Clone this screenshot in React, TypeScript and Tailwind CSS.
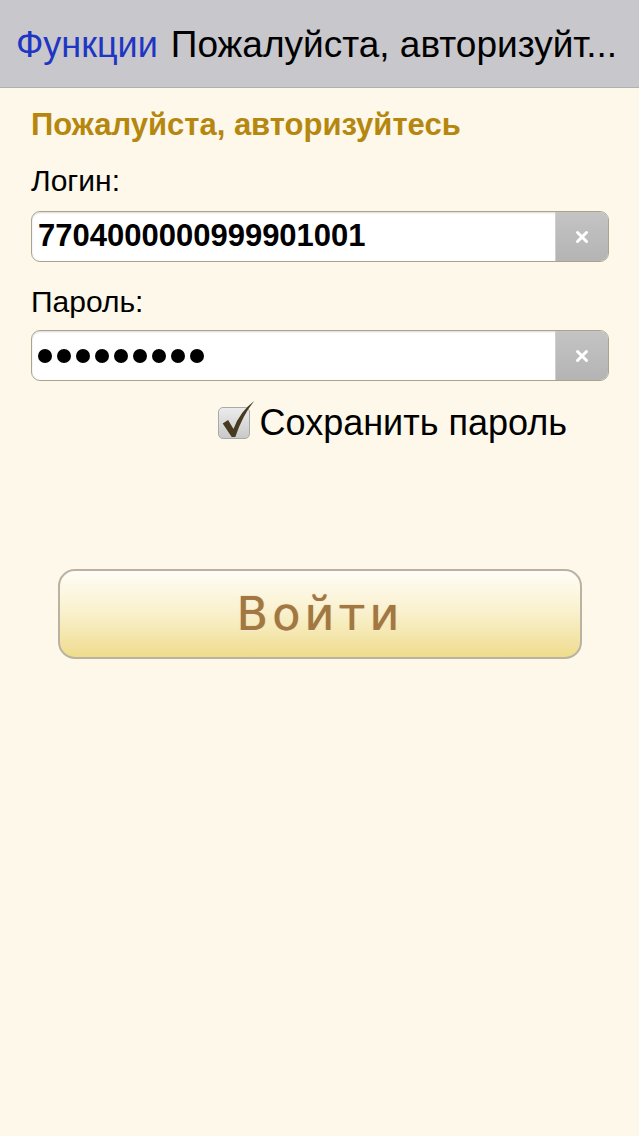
import { X } from "lucide-react";

function Field({ children }: { children: React.ReactNode }) {
  return (
    <div className="flex h-[51px] overflow-hidden rounded-[9px] border border-[#aaa48f] bg-white shadow-[inset_0_1px_2px_rgba(0,0,0,0.15)]">
      <div className="flex flex-1 items-center pl-[6px]">{children}</div>
      <div className="flex w-[53px] items-center justify-center border-l border-[#d0d0d0] bg-gradient-to-b from-[#c4c4c4] to-[#b4b4b4]">
        <X className="size-[18px] text-white" strokeWidth={4} />
      </div>
    </div>
  );
}

export default function App() {
  return (
    <div className="min-h-[1136px] bg-[#fdf8ea] font-['Liberation_Sans',Arial,sans-serif]">
      <header className="flex h-[88px] items-center gap-[13px] border-b border-[#b0b0b4] bg-[#c7c7cc] pl-[16px] pt-[2px] leading-[40px]">
        <span className="text-[36px] text-[#1f35c4]">Функции</span>
        <span className="text-[37px] text-black">Пожалуйста, авторизуйт...</span>
      </header>

      <main className="pl-[31px] pr-[30px]">
        <h1 className="pt-[19px] text-[31px] font-bold leading-[36px] text-[#b5870f]">
          Пожалуйста, авторизуйтесь
        </h1>

        <label className="mt-[21px] block text-[30px] leading-[34px] text-black">Логин:</label>
        <div className="mt-[13px]">
          <Field>
            <span className="text-[31px] font-bold text-black">7704000000999901001</span>
          </Field>
        </div>

        <label className="mt-[23px] block text-[30px] leading-[34px] text-black">Пароль:</label>
        <div className="mt-[11px]">
          <Field>
            <div className="flex gap-[5px]">
              {Array.from({ length: 9 }).map((_, i) => (
                <span key={i} className="size-[14px] rounded-full bg-black" />
              ))}
            </div>
          </Field>
        </div>

        <div className="mt-[22px] flex h-[40px] items-center justify-end gap-[10px] pr-[42px]">
          <div className="relative size-[32px] rounded-[5px] border border-[#a9a9a9] bg-gradient-to-b from-[#ececec] to-[#c9c9c9]">
            <svg viewBox="0 0 40 44" className="absolute -top-[9px] left-[1px] h-[40px] w-[36px]">
              <path d="M3 27 L9 23 L15 33 Q22 14 38 2 Q25 18 17 42 L13 42 Z" fill="#473a1f" />
            </svg>
          </div>
          <span className="text-[36px] leading-[40px] text-black">Сохранить пароль</span>
        </div>

        <div className="mt-[126px] px-[27px]">
          <button className="flex h-[90px] w-full items-center justify-center rounded-[17px] border-2 border-[#bab3a3] bg-gradient-to-b from-[#fffdf6] via-[#f9f0cb] to-[#efdc8c] font-['DejaVu_Sans',Verdana,sans-serif] text-[46px] tracking-[0.09em] text-[#a27741] [text-shadow:0_0_1px_#a27741,0_1px_0_rgba(255,255,255,0.6)]">
            Войти
          </button>
        </div>
      </main>
    </div>
  );
}
